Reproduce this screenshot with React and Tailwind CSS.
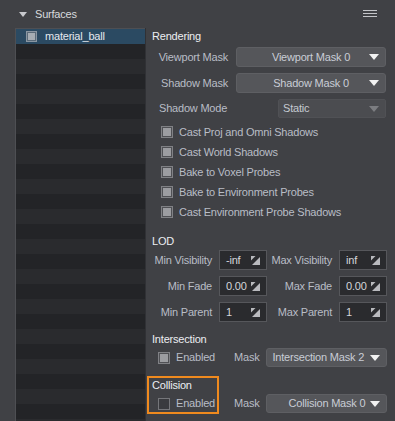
import React from 'react';

const Check = ({ on }) => (
  <div
    className={`w-[12px] h-[12px] shrink-0 border flex items-center justify-center ${
      on ? 'border-[#808185] bg-[#505155]' : 'border-[#75767a] bg-[#3a3b3f]'
    }`}
  >
    {on && <div className="w-[8px] h-[8px] bg-[#9c9da1]" />}
  </div>
);

const Arrow = ({ dim }) => (
  <svg width="10" height="6" viewBox="0 0 10 6" className="shrink-0">
    <polygon points="0,0 10,0 5,6" fill={dim ? '#7c7d81' : '#f2f2f2'} />
  </svg>
);

const Dropdown = ({ value, className = '' }) => (
  <div
    className={`relative flex items-center justify-center rounded-[3px] border border-[#5e5f63] bg-[#55565a] text-[#c9cdd6] ${className}`}
  >
    <span>{value}</span>
    <div className="absolute right-[6px] top-1/2 -translate-y-1/2 flex">
      <Arrow />
    </div>
  </div>
);

const Resize = () => (
  <svg width="9" height="9" viewBox="0 0 9 9" className="shrink-0">
    <polygon points="9,1 9,9 1,9" fill="#b9babe" />
    <polygon points="0,0 4.5,0 0,4.5" fill="#b9babe" />
  </svg>
);

const NumBox = ({ value }) => (
  <div className="w-[48px] h-[20px] flex items-center justify-between pl-[6px] pr-[6px] border border-[#56575b] bg-[#2a2b2e] text-[#d4d6da]">
    <span>{value}</span>
    <Resize />
  </div>
);

const Title = ({ children, className = '' }) => (
  <div className={`h-[14px] leading-[14px] pl-[6px] text-[#eceef2] ${className}`}>{children}</div>
);

export default function App() {
  const flags = [
    'Cast Proj and Omni Shadows',
    'Cast World Shadows',
    'Bake to Voxel Probes',
    'Bake to Environment Probes',
    'Cast Environment Probe Shadows',
  ];
  const lod = [
    ['Min Visibility', '-inf', 'Max Visibility', 'inf'],
    ['Min Fade', '0.00', 'Max Fade', '0.00'],
    ['Min Parent', '1', 'Max Parent', '1'],
  ];
  const rows = Array.from({ length: 26 }, (_, i) => i);

  return (
    <div
      className="w-[395px] h-[421px] overflow-hidden bg-[#404145] text-[11px] tracking-[-0.2px] text-[#b9bdc6] flex flex-col"
      style={{ fontFamily: '"Liberation Sans", Arial, sans-serif' }}
    >
      {/* Header */}
      <div className="h-[28px] shrink-0 flex items-center pl-[19px] pr-[18px]">
        <svg width="8" height="5" viewBox="0 0 8 5" className="mr-[8px]">
          <polygon points="0,0 8,0 4,5" fill="#c8c9cd" />
        </svg>
        <span className="text-[#d8dade]">Surfaces</span>
        <div className="ml-auto flex flex-col gap-[2px] mt-[-2px]">
          <div className="w-[14px] h-[1px] bg-[#c4c5c9]" />
          <div className="w-[14px] h-[1px] bg-[#c4c5c9]" />
          <div className="w-[14px] h-[1px] bg-[#c4c5c9]" />
        </div>
      </div>

      <div className="flex flex-1 pl-[15px] min-h-0">
        {/* Surface list */}
        <div className="w-[130px] shrink-0 border-t border-l border-[#4e4f53] flex flex-col overflow-hidden">
          <div className="h-[15px] shrink-0 bg-[#2b4a62] flex items-center pl-[10px] gap-[8px]">
            <div className="w-[11px] h-[11px] border border-[#8a96a2] bg-[#5a6a78] flex items-center justify-center">
              <div className="w-[7px] h-[7px] bg-[#a6adb4]" />
            </div>
            <span className="text-[#e4e8ee]">material_ball</span>
          </div>
          {rows.map((i) => (
            <div
              key={i}
              className={`h-[15px] shrink-0 ${i % 2 === 0 ? 'bg-[#232427]' : 'bg-[#2a2b2e]'}`}
            />
          ))}
        </div>
        <div className="w-[1px] shrink-0 bg-[#303135]" />

        {/* Properties */}
        <div className="flex-1 flex flex-col">
          <Title className="mt-[1px]">Rendering</Title>

          <div className="mt-[4px] h-[20px] flex items-center">
            <div className="w-[82px] text-right">Viewport Mask</div>
            <Dropdown value="Viewport Mask 0" className="ml-[8px] w-[150px] h-[20px]" />
          </div>
          <div className="mt-[6px] h-[20px] flex items-center">
            <div className="w-[82px] text-right">Shadow Mask</div>
            <Dropdown value="Shadow Mask 0" className="ml-[8px] w-[150px] h-[20px]" />
          </div>
          <div className="mt-[6px] h-[19px] flex items-center">
            <div className="pl-[13px] w-[132px]">Shadow Mode</div>
            <div className="w-[108px] h-[19px] flex items-center justify-between pl-[4px] pr-[6px] rounded-[2px] border border-[#505155] bg-[#4b4c50] text-[#c5c9d1]">
              <span>Static</span>
              <Arrow dim />
            </div>
          </div>

          <div className="mt-[4px] flex flex-col">
            {flags.map((f) => (
              <div key={f} className="h-[20px] flex items-center pl-[15px] gap-[6px]">
                <Check on />
                <span>{f}</span>
              </div>
            ))}
          </div>

          <Title className="mt-[12px]">LOD</Title>
          <div className="mt-[2px] flex flex-col gap-[6px]">
            {lod.map(([a, av, b, bv]) => (
              <div key={a} className="h-[20px] flex items-center">
                <div className="w-[66px] text-right">{a}</div>
                <div className="ml-[7px]">
                  <NumBox value={av} />
                </div>
                <div className="w-[65px] text-right">{b}</div>
                <div className="ml-[7px]">
                  <NumBox value={bv} />
                </div>
              </div>
            ))}
          </div>

          <Title className="mt-[10px]">Intersection</Title>
          <div className="mt-[2px] h-[19px] flex items-center">
            <div className="pl-[12px] w-[88px] flex items-center gap-[6px]">
              <Check on />
              <span>Enabled</span>
            </div>
            <span>Mask</span>
            <Dropdown value="Intersection Mask 2" className="ml-[7px] w-[121px] h-[19px] justify-start pl-[5px]" />
          </div>

          <div className="relative mt-[11px]">
            <div className="absolute left-[1px] top-[-2px] w-[72px] h-[38px] border-2 border-[#f08a1e]" />
            <Title>Collision</Title>
            <div className="mt-[2px] h-[19px] flex items-center">
              <div className="pl-[12px] w-[88px] flex items-center gap-[6px]">
                <Check />
                <span>Enabled</span>
              </div>
              <span>Mask</span>
              <Dropdown value="Collision Mask 0" className="ml-[7px] w-[121px] h-[19px]" />
            </div>
          </div>
        </div>
      </div>
    </div>
  );
}
